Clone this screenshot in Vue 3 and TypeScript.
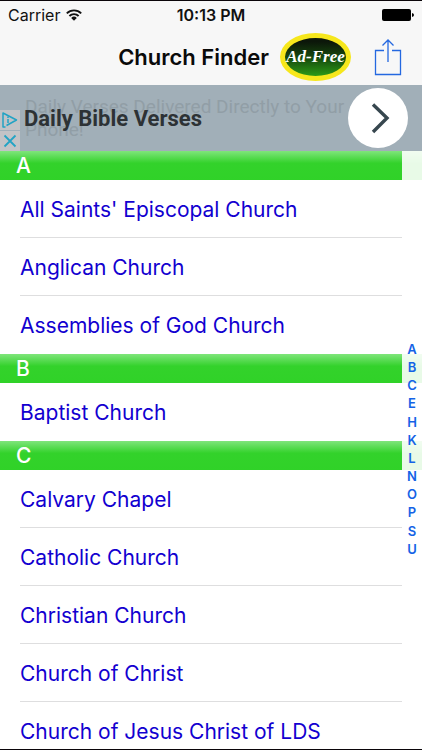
<script setup lang="ts">
interface Section {
  letter: string
  churches: string[]
}

const sections: Section[] = [
  {
    letter: 'A',
    churches: ["All Saints' Episcopal Church", 'Anglican Church', 'Assemblies of God Church'],
  },
  { letter: 'B', churches: ['Baptist Church'] },
  {
    letter: 'C',
    churches: [
      'Calvary Chapel',
      'Catholic Church',
      'Christian Church',
      'Church of Christ',
      'Church of Jesus Christ of LDS',
    ],
  },
]

const indexLetters: string[] = ['A', 'B', 'C', 'E', 'H', 'K', 'L', 'N', 'O', 'P', 'S', 'U']
</script>

<template>
  <div class="screen">
    <div class="status">
      <div class="carrier">
        <span>Carrier</span>
        <svg class="wifi" width="16" height="12" viewBox="0 0 16 12" aria-hidden="true">
          <g fill="none" stroke="#111" stroke-width="1.900">
            <path d="M.8 4.400a10.200 10.200 0 0 1 14.400 0" />
            <path d="M3.400 7a6.500 6.500 0 0 1 9.200 0" />
          </g>
          <path d="M8 11.700 5.200 8.900a4 4 0 0 1 5.600 0z" fill="#111" />
        </svg>
      </div>
      <span class="clock">10:13 PM</span>
      <svg class="battery" width="32" height="14" viewBox="0 0 32 14" aria-hidden="true">
        <rect x="0" y="1" width="29" height="12" rx="2" />
        <path d="M30 5q2 .5 2 2t-2 2z" />
      </svg>
    </div>

    <header class="bar">
      <h1>Church Finder</h1>
      <button class="adfree" type="button">Ad-Free</button>
      <button class="share" type="button" aria-label="Share">
        <svg width="28" height="38" viewBox="0 0 28 38" fill="none" stroke="#2468e0" stroke-width="1.300">
          <path d="M10 12.500H1.500V36.500H26.500V12.500H18" />
          <path d="M14 24V2M8.500 7.500 14 2l5.500 5.500" />
        </svg>
      </button>
    </header>

    <aside class="ad">
      <p class="ad-detail">Daily Verses Delivered Directly to Your Phone!</p>
      <a class="ad-title" href="#">Daily Bible Verses</a>
      <button class="ad-go" type="button" aria-label="Open">
        <svg width="60" height="60" viewBox="0 0 60 60" fill="none" stroke="#37474f" stroke-width="3.400">
          <path d="M25 16.500 39 30 25 44" />
        </svg>
      </button>
      <div class="ad-tools">
        <button type="button" aria-label="Ad choices">
          <svg width="20" height="20" viewBox="0 0 20 20" fill="none" stroke="#23a3c4" stroke-width="1.500" stroke-linejoin="round">
            <path d="M5.500 17H3V3L16.500 10 6.500 15.500" />
            <path d="M8 9V13M8 6.500V7.900" />
          </svg>
        </button>
        <button type="button" aria-label="Close ad">
          <svg width="20" height="20" viewBox="0 0 20 20" fill="none" stroke="#23a3c4" stroke-width="1.800">
            <path d="M4.500 4.500 15.500 15.500M15.500 4.500 4.500 15.500" />
          </svg>
        </button>
      </div>
    </aside>

    <main class="body">
      <div class="list">
        <section v-for="section in sections" :id="'section-' + section.letter" :key="section.letter">
          <h2>{{ section.letter }}</h2>
          <ul>
            <li v-for="church in section.churches" :key="church">
              <a href="#">{{ church }}</a>
            </li>
          </ul>
        </section>
      </div>
      <nav class="index" aria-label="Sections">
        <div class="letters">
          <a v-for="letter in indexLetters" :key="letter" :href="'#section-' + letter">{{ letter }}</a>
        </div>
      </nav>
    </main>
  </div>
</template>

<style>
body {
  margin: 0;
  background: #fff;
}
</style>

<style scoped>
* {
  box-sizing: border-box;
}

.screen {
  display: flex;
  flex-direction: column;
  height: 100vh;
  border-top: 1px solid #0a0509;
  border-bottom: 1px solid #0a0509;
  font-family: Inter, "Liberation Sans", sans-serif;
  background: #fff;
}

button {
  padding: 0;
  border: 0;
  background: none;
  cursor: pointer;
}

svg {
  display: block;
}

a {
  text-decoration: none;
}

.status {
  display: grid;
  grid-template-columns: 1fr auto 1fr;
  align-items: center;
  height: 28px;
  padding: 0 8px;
  background: #f7f7f7;
  font-size: 16px;
  color: #111;
}

.carrier {
  display: flex;
  align-items: center;
  gap: 6px;
}

.clock {
  font-weight: 600;
}

.battery {
  justify-self: end;
  fill: #000;
}

.bar {
  display: flex;
  align-items: center;
  justify-content: flex-end;
  height: 56px;
  padding: 0 20px 0 0;
  background: #f7f7f7;
}

h1 {
  margin: 0;
  font-size: 22px;
  font-weight: 600;
  line-height: 28px;
  color: #0a0a0a;
}

.adfree {
  display: flex;
  align-items: center;
  justify-content: center;
  width: 71px;
  height: 48px;
  margin: 0 23px 0 11px;
  border: 5px solid #f6e71c;
  border-radius: 50%;
  background: linear-gradient(#0c170a 10%, #174d0d 55%, #2c9a17);
  font-family: "Liberation Serif", serif;
  font-size: 17px;
  font-style: italic;
  font-weight: 700;
  color: #fff;
  white-space: nowrap;
}

.ad {
  position: relative;
  display: flex;
  align-items: center;
  justify-content: space-between;
  height: 66px;
  padding: 0 14px 0 24px;
  background: #a1afb8;
  font-family: Roboto, sans-serif;
}

.ad-detail {
  position: absolute;
  top: 10px;
  left: 25px;
  right: 70px;
  margin: 0;
  font-size: 19px;
  line-height: 23px;
  color: #919ea6;
}

.ad-title {
  position: relative;
  font-size: 22px;
  font-weight: 700;
  color: #2d3235;
}

.ad-go {
  position: relative;
  width: 60px;
  height: 60px;
  border-radius: 50%;
  background: #fff;
}

.ad-tools {
  position: absolute;
  left: 0;
  bottom: 0;
  display: grid;
  gap: 1px;
}

.ad-tools button {
  background: #c2c3c6;
}

.body {
  position: relative;
  flex: 1;
  min-height: 0;
}

.list {
  height: 100%;
  overflow-y: auto;
  scrollbar-width: none;
}

h2 {
  height: 29px;
  margin: 0;
  padding-left: 16px;
  background: linear-gradient(#7fe57b, #33d22b 42%, #30d228);
  font-size: 21px;
  font-weight: 500;
  line-height: 30px;
  color: #fff;
}

ul {
  margin: 0;
  padding: 0 20px;
  list-style: none;
}

li {
  height: 58px;
  border-bottom: 1px solid #dededf;
}

li:last-child {
  border-bottom-color: transparent;
}

li a {
  display: block;
  font-size: 21px;
  line-height: 60px;
  color: #1200d0;
  white-space: nowrap;
}

.index {
  position: absolute;
  top: 0;
  right: 0;
  bottom: 0;
  display: flex;
  align-items: center;
  justify-content: center;
  width: 20px;
  padding-bottom: 2px;
  background: rgba(255, 255, 255, 0.89);
}

.letters {
  display: grid;
  grid-auto-rows: 1fr;
  height: 218px;
}

.letters a {
  font-size: 13px;
  font-weight: 600;
  line-height: 18px;
  text-align: center;
  color: #1463e6;
}
</style>
